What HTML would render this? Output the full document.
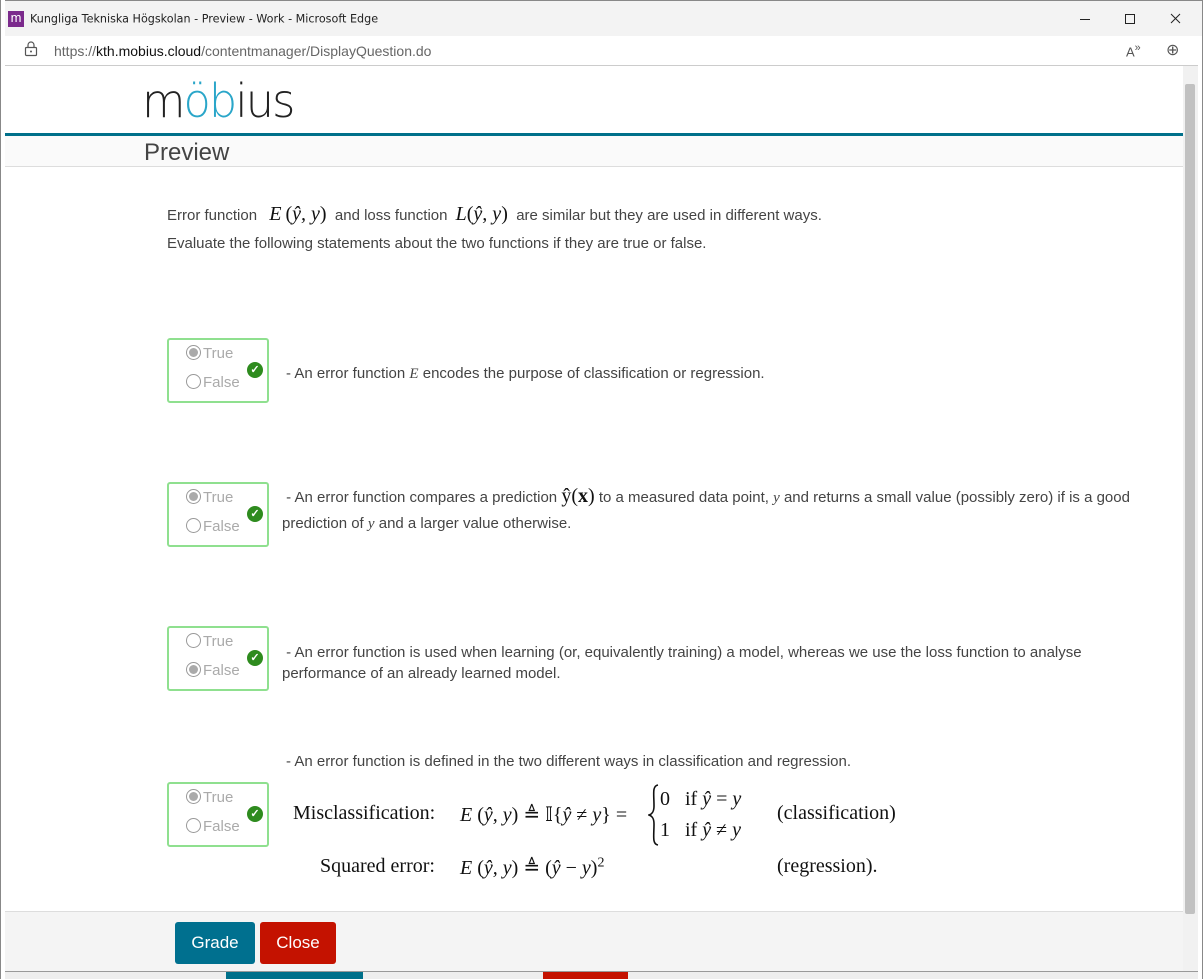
<!DOCTYPE html>
<html><head><meta charset="utf-8"><style>
*{margin:0;padding:0;box-sizing:border-box}
body{width:1203px;height:979px;overflow:hidden;background:#fff;font-family:"Liberation Sans",sans-serif;position:relative}
.a{position:absolute;white-space:nowrap}
.t{font-size:15px;color:#444}
.m{font-family:"Liberation Serif",serif;font-style:italic}
.box{position:absolute;left:167px;width:102px;height:65px;border:2px solid #8fe08f;border-radius:3px}
.r{position:absolute;left:17px;font-size:15px;color:#aaa}
.r i{display:inline-block;width:15px;height:15px;border:1px solid #999;border-radius:50%;vertical-align:-2px;margin-right:2px;position:relative}
.r i.on:after{content:"";position:absolute;left:2px;top:2px;width:9px;height:9px;border-radius:50%;background:#aaa}
.ck{position:absolute;left:78px;top:22px;width:16px;height:16px;border-radius:50%;background:#2e8b1e;color:#fff;font-size:11px;text-align:center;line-height:16px;font-weight:bold}
.eq{font-family:"Liberation Serif",serif;font-size:20px;color:#111}
</style></head><body>
<div class="a" style="left:0;top:0;width:1203px;height:36px;background:#f3f3f3;border:1px solid #888;border-bottom:none"></div>
<div class="a" style="left:8px;top:11px;width:16px;height:16px;background:#7b2a8c;color:#fff;font-size:13px;line-height:14px;text-align:center">m</div>
<div class="a" style="left:30px;top:12px;font-size:12px;color:#222;font-family:'DejaVu Sans',sans-serif;transform:scale(0.93);transform-origin:left">Kungliga Tekniska Högskolan - Preview - Work - Microsoft Edge</div>
<svg class="a" style="left:1070px;top:8px" width="120" height="22"><g stroke="#222" stroke-width="1" fill="none"><path d="M10 11.5h10"/><rect x="55.5" y="6.5" width="9" height="9"/><path d="M101 6l9 9M110 6l-9 9"/></g></svg>
<div class="a" style="left:5px;top:36px;width:1193px;height:30px;background:#fff;border-bottom:1px solid #ccc"></div>
<svg class="a" style="left:24px;top:41px" width="14" height="16"><g stroke="#555" fill="none" stroke-width="1.2"><rect x="1.5" y="6.5" width="11" height="8" rx="1"/><path d="M4 6.5V4a3 3 0 0 1 6 0v2.5"/></g><circle cx="7" cy="10.5" r="1" fill="#555"/></svg>
<div class="a" style="left:54px;top:43px;font-size:14px;color:#666">https://<span style="color:#111">kth.mobius.cloud</span>/contentmanager/DisplayQuestion.do</div>
<div class="a" style="left:1126px;top:42px;font-size:13px;color:#555">A<sup>»</sup></div>
<div class="a" style="left:1166px;top:40px;font-size:16px;color:#555">⊕</div>
<div class="a" style="left:0;top:0;width:5px;height:979px;background:#fff;border-left:1px solid #888"></div>
<div class="a" style="left:1198px;top:36px;width:5px;height:943px;border-right:1px solid #888"></div>
<div class="a" style="left:1183px;top:66px;width:15px;height:905px;background:#f1f1f1"></div>
<div class="a" style="left:1185px;top:84px;width:10px;height:830px;background:#c1c1c1;border-radius:2px"></div>
<div class="a" style="left:142px;top:74px;font-size:46px;color:#222;font-family:'DejaVu Sans',sans-serif;font-weight:300;letter-spacing:-2px;transform:scaleX(0.97);transform-origin:left">m<span style="color:#2aa6c9">öb</span>ius</div>
<div class="a" style="left:5px;top:133px;width:1178px;height:3px;background:#00708a"></div>
<div class="a" style="left:5px;top:136px;width:1178px;height:31px;background:#fafafa;border-bottom:1px solid #ddd"></div>
<div class="a" style="left:144px;top:139px;font-size:24px;color:#444">Preview</div>
<div class="a t" style="left:167px;top:203px">Error function <span class="eq m" style="margin:0 4px 0 8px">E</span><span class="eq">(</span><span class="eq m">ŷ, y</span><span class="eq">)</span>&nbsp; and loss function <span class="eq m" style="margin-left:4px">L</span><span class="eq">(</span><span class="eq m">ŷ, y</span><span class="eq">)</span>&nbsp; are similar but they are used in different ways.</div>
<div class="a t" style="left:167px;top:235px">Evaluate the following statements about the two functions if they are true or false.</div>

<div class="box" style="top:338px"><div class="r" style="top:5px"><i class="on"></i>True</div><div class="r" style="top:34px"><i></i>False</div><div class="ck">✓</div></div>
<div class="a t" style="left:286px;top:365px">- An error function <span class="m">E</span> encodes the purpose of classification or regression.</div>

<div class="box" style="top:482px"><div class="r" style="top:5px"><i class="on"></i>True</div><div class="r" style="top:34px"><i></i>False</div><div class="ck">✓</div></div>
<div class="a t" style="left:282px;top:484px;width:870px;line-height:25px;white-space:normal">&nbsp;- An error function compares a prediction <span class="eq">ŷ(<b>x</b>)</span> to a measured data point, <span class="m">y</span> and returns a small value (possibly zero) if is a good prediction of <span class="m">y</span> and a larger value otherwise.</div>

<div class="box" style="top:626px"><div class="r" style="top:5px"><i></i>True</div><div class="r" style="top:34px"><i class="on"></i>False</div><div class="ck">✓</div></div>
<div class="a t" style="left:282px;top:642px;width:820px;line-height:21px;white-space:normal">&nbsp;- An error function is used when learning (or, equivalently training) a model, whereas we use the loss function to analyse performance of an already learned model.</div>

<div class="a t" style="left:286px;top:753px">- An error function is defined in the two different ways in classification and regression.</div>
<div class="box" style="top:782px"><div class="r" style="top:5px"><i class="on"></i>True</div><div class="r" style="top:34px"><i></i>False</div><div class="ck">✓</div></div>
<div class="a eq" style="left:293px;top:802px">Misclassification:</div>
<div class="a eq" style="left:460px;top:802px"><span class="m">E</span> (<span class="m">ŷ, y</span>) ≜ 𝕀{<span class="m">ŷ</span> ≠ <span class="m">y</span>} =</div>
<svg class="a" style="left:648px;top:784px" width="12" height="62"><path d="M10 1C4 2 6 10 6 22C6 28 4 30 1 31C4 32 6 34 6 40C6 52 4 60 10 61" stroke="#111" stroke-width="1.6" fill="none"/></svg>
<div class="a eq" style="left:660px;top:788px">0&nbsp;&nbsp;&nbsp;if <span class="m">ŷ</span> = <span class="m">y</span></div>
<div class="a eq" style="left:660px;top:819px">1&nbsp;&nbsp;&nbsp;if <span class="m">ŷ</span> ≠ <span class="m">y</span></div>
<div class="a eq" style="left:777px;top:802px">(classification)</div>
<div class="a eq" style="left:320px;top:855px">Squared error:</div>
<div class="a eq" style="left:460px;top:855px"><span class="m">E</span> (<span class="m">ŷ, y</span>) ≜ (<span class="m">ŷ</span> − <span class="m">y</span>)<sup style="font-size:14px">2</sup></div>
<div class="a eq" style="left:777px;top:855px">(regression).</div>

<div class="a" style="left:5px;top:911px;width:1178px;height:60px;background:#f4f4f4;border-top:1px solid #ddd"></div>
<div class="a" style="left:175px;top:922px;width:80px;height:42px;background:#00708f;border-radius:3px;color:#fff;font-size:17px;text-align:center;line-height:42px">Grade</div>
<div class="a" style="left:260px;top:922px;width:76px;height:42px;background:#c41200;border-radius:3px;color:#fff;font-size:17px;text-align:center;line-height:42px">Close</div>
<div class="a" style="left:5px;top:971px;width:1193px;height:8px;background:#eee;border-top:1px solid #999"></div>
<div class="a" style="left:226px;top:972px;width:137px;height:7px;background:#00708a"></div>
<div class="a" style="left:543px;top:972px;width:85px;height:7px;background:#c41200"></div>
</body></html>
